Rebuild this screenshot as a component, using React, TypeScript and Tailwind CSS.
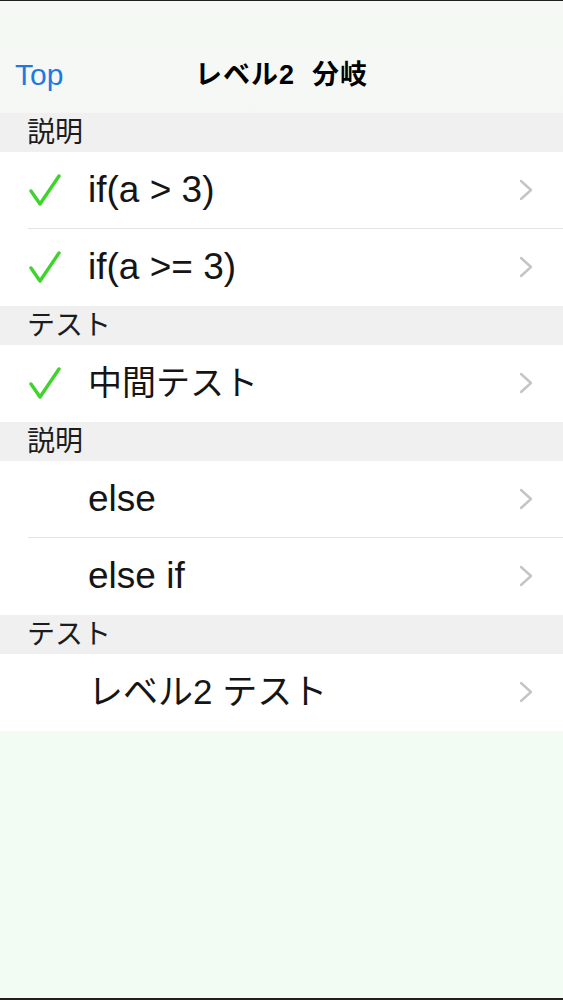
const font = { fontFamily: '"Liberation Sans", "Noto Sans CJK JP", sans-serif' };

type Row = { label: string; done: boolean; size: string };
type Section = { title: string; rows: Row[] };

const sections: Section[] = [
  {
    title: "説明",
    rows: [
      { label: "if(a > 3)", done: true, size: "text-[37px]" },
      { label: "if(a >= 3)", done: true, size: "text-[37px]" },
    ],
  },
  { title: "テスト", rows: [{ label: "中間テスト", done: true, size: "text-[34px]" }] },
  {
    title: "説明",
    rows: [
      { label: "else", done: false, size: "text-[37px]" },
      { label: "else if", done: false, size: "text-[37px]" },
    ],
  },
  { title: "テスト", rows: [{ label: "レベル2 テスト", done: false, size: "text-[35px]" }] },
];

function Check() {
  return (
    <svg width="32" height="34" viewBox="0 0 32 34" fill="none">
      <path
        d="M2 18 L11 31 L30 3"
        stroke="#3fd42b"
        strokeWidth="3.4"
        strokeLinecap="round"
        strokeLinejoin="round"
      />
    </svg>
  );
}

function Chevron() {
  return (
    <svg width="14" height="22" viewBox="0 0 14 22" fill="none">
      <path
        d="M2 2 L12 11 L2 20"
        stroke="#c4c4c9"
        strokeWidth="2.4"
        strokeLinecap="round"
        strokeLinejoin="round"
      />
    </svg>
  );
}

export default function App() {
  return (
    <div
      style={font}
      className="flex h-[1000px] flex-col border-t border-b-2 border-[#1e1f1e] bg-[#f2fcf2]"
    >
      <div className="flex h-[112px] flex-col justify-end bg-gradient-to-b from-[#f4f9f3] to-[#f6f7f5]">
        <div className="grid h-[66px] grid-cols-[1fr_auto_1fr] items-start pt-[8px]">
          <span className="pl-[15px] text-[30px] leading-[40px] text-[#1f7ae0]">Top</span>
          <span className="text-[27px] font-bold leading-[40px] tracking-[1px] text-black">
            レベル2&nbsp; 分岐
          </span>
          <span />
        </div>
      </div>

      {sections.map((s, i) => (
        <div key={i}>
          <div className="flex h-[39px] items-end bg-[#f0f0f0] pb-[1px] pl-[27px] text-[28px] leading-[36px] text-[#1c1c1c]">
            {s.title}
          </div>
          {s.rows.map((r, j) => (
            <div key={j} className="bg-white">
              <div className="flex h-[76px] items-center">
                <div className="flex w-[88px] items-center pl-[29px]">
                  {r.done && <Check />}
                </div>
                <span className={`flex-1 text-[#151515] ${r.size}`}>{r.label}</span>
                <div className="pr-[30px]">
                  <Chevron />
                </div>
              </div>
              <div
                className={
                  j < s.rows.length - 1
                    ? "ml-[28px] h-px bg-[#e4e4e4]"
                    : "h-px bg-white"
                }
              />
            </div>
          ))}
        </div>
      ))}
    </div>
  );
}
